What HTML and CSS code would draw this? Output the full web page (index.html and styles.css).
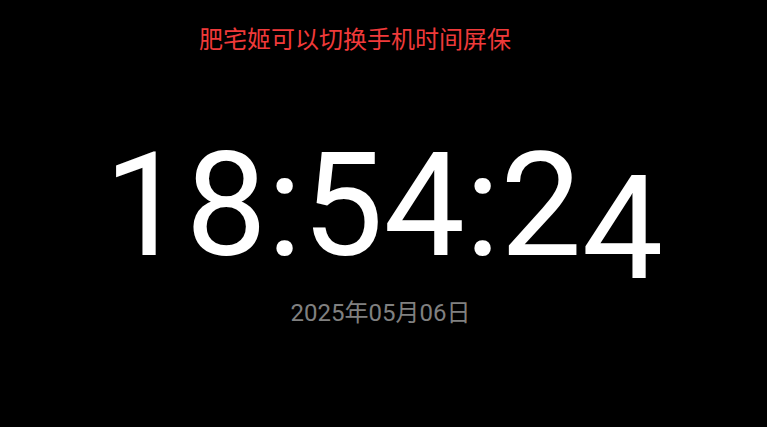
FILE: index.html
```html
<!DOCTYPE html>
<html lang="zh-CN">
<head>
<meta charset="utf-8">
<title>时间屏保</title>
<link rel="stylesheet" href="styles.css">
</head>
<body>
<div class="screen">
  <div class="title">肥宅姬可以切换手机时间屏保</div>
  <div class="clock"><span>1</span><span>8</span><span>:</span><span>5</span><span>4</span><span>:</span><span>2</span><span class="flip">4</span></div>
  <div class="date">2025年05月06日</div>
</div>
</body>
</html>
```
FILE: styles.css
```css
html, body {
  margin: 0;
  padding: 0;
  background: #000;
}
.screen {
  width: 767px;
  height: 427px;
  overflow: hidden;
  display: flex;
  flex-direction: column;
  background: #000;
}
.title {
  margin-top: 26px;
  padding-left: 199px;
  font-family: "Noto Sans CJK SC", sans-serif;
  font-size: 24px;
  line-height: 24px;
  color: #f03a3a;
  white-space: nowrap;
}
.clock {
  margin-top: 83px;
  text-align: center;
  font-family: Roboto, sans-serif;
  font-size: 145px;
  line-height: 145px;
  color: #fff;
  white-space: nowrap;
}
.clock .flip {
  display: inline-block;
  transform: translateY(23px);
}
.date {
  margin-top: 23px;
  padding-right: 6px;
  text-align: center;
  font-family: Roboto, "Noto Sans CJK SC", sans-serif;
  font-size: 24px;
  line-height: 24px;
  color: #808080;
  white-space: nowrap;
}
```
